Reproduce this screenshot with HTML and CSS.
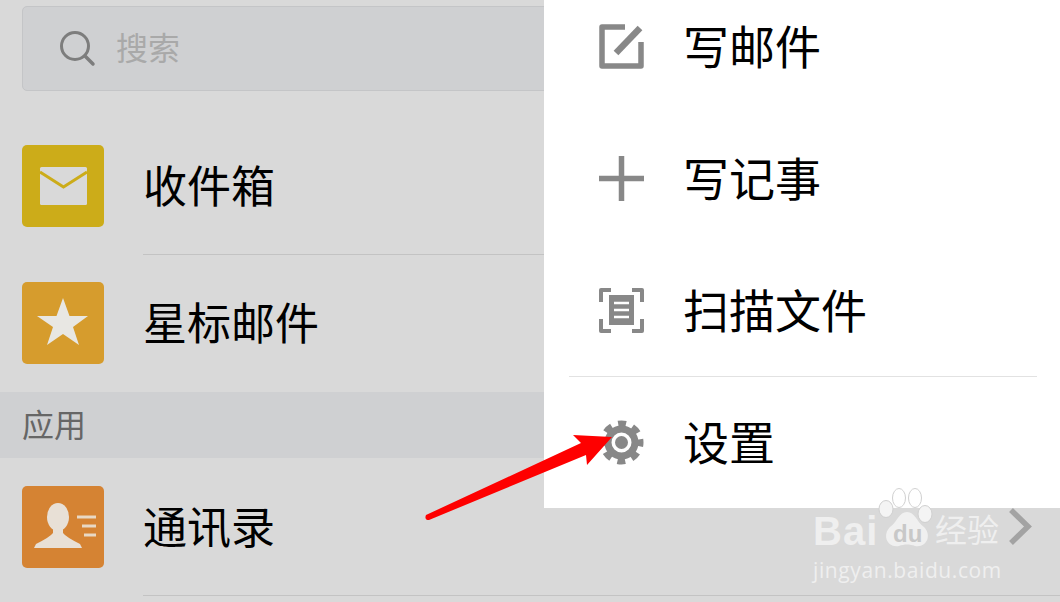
FILE: index.html
```html
<!DOCTYPE html>
<html lang="zh-CN">
<head>
    <meta charset="UTF-8">
    <title>邮箱</title>
    <link rel="stylesheet" href="styles.css">
</head>
<body>

<div class="screen">
    <div class="search-wrap">
        <div class="search-box">
            <svg class="search-icon" width="36" height="36" viewBox="0 0 36 36">
                <circle cx="15" cy="15" r="13.5" fill="none" stroke="#7d7d7d" stroke-width="3"/>
                <path d="M25 25 L33 33" stroke="#7d7d7d" stroke-width="3.5" stroke-linecap="round"/>
            </svg>
            <span class="search-text">搜索</span>
        </div>
    </div>

    <div class="row row-first">
        <div class="app-icon icon-mail">
            <svg width="82" height="82" viewBox="0 0 82 82">
                <rect x="18" y="22" width="47" height="38" rx="1.5" fill="#d9d9d9"/>
                <path d="M18 27 L41.5 42 L65 27" fill="none" stroke="#ccac19" stroke-width="3"/>
            </svg>
        </div>
        <div class="row-body divided"><span class="row-label">收件箱</span></div>
    </div>
    <div class="row row-star">
        <div class="app-icon icon-star">
            <svg width="82" height="82" viewBox="0 0 82 82">
                <polygon points="41,16 47.5,34 66,34 51,45 57,63 41,52 25,63 31,45 15,34 34.5,34" fill="#e8e7e3"/>
            </svg>
        </div>
        <div class="row-body"><span class="row-label">星标邮件</span></div>
    </div>

    <div class="section-title">应用</div>

    <div class="row row-contacts">
        <div class="app-icon icon-contact">
            <svg width="82" height="82" viewBox="0 0 82 82">
                <ellipse cx="36" cy="31" rx="11" ry="14" fill="#e8e0d6"/>
                <path d="M31 40 L31 47 Q28 51 14 58 L12 62 L60 62 L58 58 Q44 51 41 47 L41 40 Z" fill="#e8e0d6"/>
                <path d="M55 31 H74 M60 40 H74 M62 49 H74" stroke="#e8d8c4" stroke-width="3"/>
            </svg>
        </div>
        <div class="row-body divided">
            <span class="row-label">通讯录</span>
            <svg class="chevron" width="24" height="38" viewBox="0 0 24 38">
                <path d="M3 2 L20 18.5 L3 35" fill="none" stroke="#a3a3a3" stroke-width="5.5"/>
            </svg>
        </div>
    </div>

    <div class="menu">
        <div class="menu-item">
            <svg width="45" height="45" viewBox="0 0 45 45">
                <path d="M26 3 H3 V42 H42 V18" fill="none" stroke="#888" stroke-width="5.5" stroke-linejoin="round"/>
                <path d="M41 4 L17 29" stroke="#888" stroke-width="6.5"/>
            </svg>
            <span class="menu-label">写邮件</span>
        </div>
        <div class="menu-item">
            <svg width="45" height="45" viewBox="0 0 45 45">
                <path d="M0 22.5 H45 M22.5 0 V45" stroke="#888" stroke-width="5.5"/>
            </svg>
            <span class="menu-label">写记事</span>
        </div>
        <div class="menu-item">
            <svg width="45" height="45" viewBox="0 0 45 45">
                <path d="M12 2 H2 V14 M33 2 H43 V14 M2 31 V43 H12 M43 31 V43 H33" fill="none" stroke="#888" stroke-width="4" stroke-linejoin="round"/>
                <rect x="10" y="7" width="25" height="30" fill="#888"/>
                <path d="M15 15 H30 M15 22 H30 M15 29 H30" stroke="#fff" stroke-width="2.5"/>
            </svg>
            <span class="menu-label">扫描文件</span>
        </div>
        <div class="menu-line"></div>
        <div class="menu-item menu-item-last">
            <svg width="45" height="45" viewBox="0 0 45 45">
                <circle cx="22.5" cy="22.5" r="19" fill="none" stroke="#888" stroke-width="6" stroke-dasharray="8 6.92" stroke-dashoffset="4"/>
                <circle cx="22.5" cy="22.5" r="13.5" fill="none" stroke="#888" stroke-width="7"/>
                <circle cx="22.5" cy="22.5" r="6.5" fill="#888"/>
            </svg>
            <span class="menu-label">设置</span>
        </div>
    </div>

    <!-- red arrow drawn on top of the screenshot -->
    <svg class="arrow" width="200" height="100" viewBox="0 0 200 100">
        <path d="M6 90 L161 18 L153 10 L192 12 L167 40 L166 30 L9 95 Q4 95 6 90 Z" fill="#fe0000"/>
    </svg>

    <div class="watermark">
        <div class="wm-top">
            <span class="wm-bai">Bai</span>
            <svg class="wm-paw" width="58" height="60" viewBox="0 0 58 60">
                <ellipse cx="8" cy="21" rx="7" ry="8.5" fill="#f4f4f4" stroke="#d0d0d0"/>
                <ellipse cx="21" cy="10" rx="6.5" ry="9.5" fill="#fff" stroke="#d0d0d0"/>
                <ellipse cx="37" cy="10" rx="6.5" ry="9.5" fill="#fff" stroke="#d0d0d0"/>
                <ellipse cx="47" cy="26" rx="7" ry="8.5" fill="#f4f4f4" stroke="#d0d0d0"/>
                <path d="M29 24 C37 24 38 33 46 39 C54 47 49 60 37 58 C32 56 26 56 21 58 C9 60 4 47 12 39 C20 33 21 24 29 24 Z" fill="#f0f0f0"/>
            </svg>
            <span class="wm-du">du</span>
            <span class="wm-jy">经验</span>
        </div>
        <div class="wm-url">jingyan.baidu.com</div>
    </div>
</div>

</body>
</html>
```

FILE: styles.css
```css
* {
    margin: 0;
    padding: 0;
    box-sizing: border-box;
    font-family: 'Noto Sans CJK SC', 'Noto Sans', sans-serif;
}

body {
    background-color: #d9d9d9;
    overflow: hidden;
}

.screen {
    position: relative;
    width: 1060px;
    height: 602px;
    overflow: hidden;
}

.search-wrap {
    height: 117px;
    padding: 6px 0 0 22px;
}

.search-box {
    display: flex;
    align-items: center;
    height: 85px;
    padding-left: 37px;
    background-color: #cfd0d2;
    border: 1px solid #c4c5c7;
    border-radius: 5px;
}

.search-icon {
    margin-right: 20px;
}

.search-text {
    margin-bottom: 5px;
    font-size: 32px;
    line-height: 1;
    color: #a9a9a9;
}

.row {
    display: flex;
    height: 137px;
    padding-left: 22px;
    align-items: center;
}

.row-first,
.row-contacts {
    height: 138px;
}

.row-star {
    padding-bottom: 1px;
}

.app-icon {
    width: 82px;
    height: 82px;
    border-radius: 5px;
    flex-shrink: 0;
}

.app-icon svg {
    display: block;
}

.icon-mail {
    background-color: #ccac19;
}

.icon-star {
    background-color: #d69c2d;
}

.icon-contact {
    background-color: #d58333;
}

.row-body {
    display: flex;
    align-items: center;
    justify-content: space-between;
    align-self: stretch;
    flex: 1;
    margin-left: 39px;
    padding-right: 28px;
    font-size: 44px;
    color: #000;
}

.row-label {
    margin-bottom: 4px;
}

.divided {
    border-bottom: 1px solid #c3c3c3;
}

.section-title {
    height: 66px;
    padding-left: 22px;
    font-size: 32px;
    line-height: 62px;
    color: #666;
    background-color: #cfd0d2;
}

.menu {
    position: absolute;
    top: -20px;
    left: 544px;
    width: 516px;
    height: 528px;
    background-color: #fff;
}

.menu-item {
    display: flex;
    align-items: center;
    gap: 39px;
    height: 132px;
    padding-left: 55px;
    font-size: 46px;
    color: #000;
}

.menu-label {
    margin-bottom: 5px;
}

.menu-item-last {
    height: 131px;
}

.menu-line {
    height: 1px;
    margin: 0 23px 0 25px;
    background-color: #e2e2e2;
}

.arrow {
    position: absolute;
    left: 420px;
    top: 425px;
}

.watermark {
    position: absolute;
    left: 813px;
    top: 488px;
    width: 200px;
    color: #efefef;
}

.wm-top {
    position: relative;
    height: 68px;
}

.wm-bai {
    position: absolute;
    left: 0;
    top: 21px;
    font-family: 'Liberation Sans', sans-serif;
    font-size: 40px;
    line-height: 44px;
    font-weight: 700;
    letter-spacing: 1px;
}

.wm-paw {
    position: absolute;
    left: 65px;
    top: 0;
}

.wm-du {
    position: absolute;
    left: 80px;
    top: 33px;
    font-family: 'Liberation Sans', sans-serif;
    font-size: 24px;
    line-height: 26px;
    font-weight: 700;
    color: #c8c8c8;
}

.wm-jy {
    position: absolute;
    left: 122px;
    top: 20px;
    font-size: 32px;
    line-height: 40px;
}

.wm-url {
    font-family: 'Open Sans', sans-serif;
    font-size: 21px;
    line-height: 28px;
    letter-spacing: 0.6px;
    white-space: nowrap;
}
```
